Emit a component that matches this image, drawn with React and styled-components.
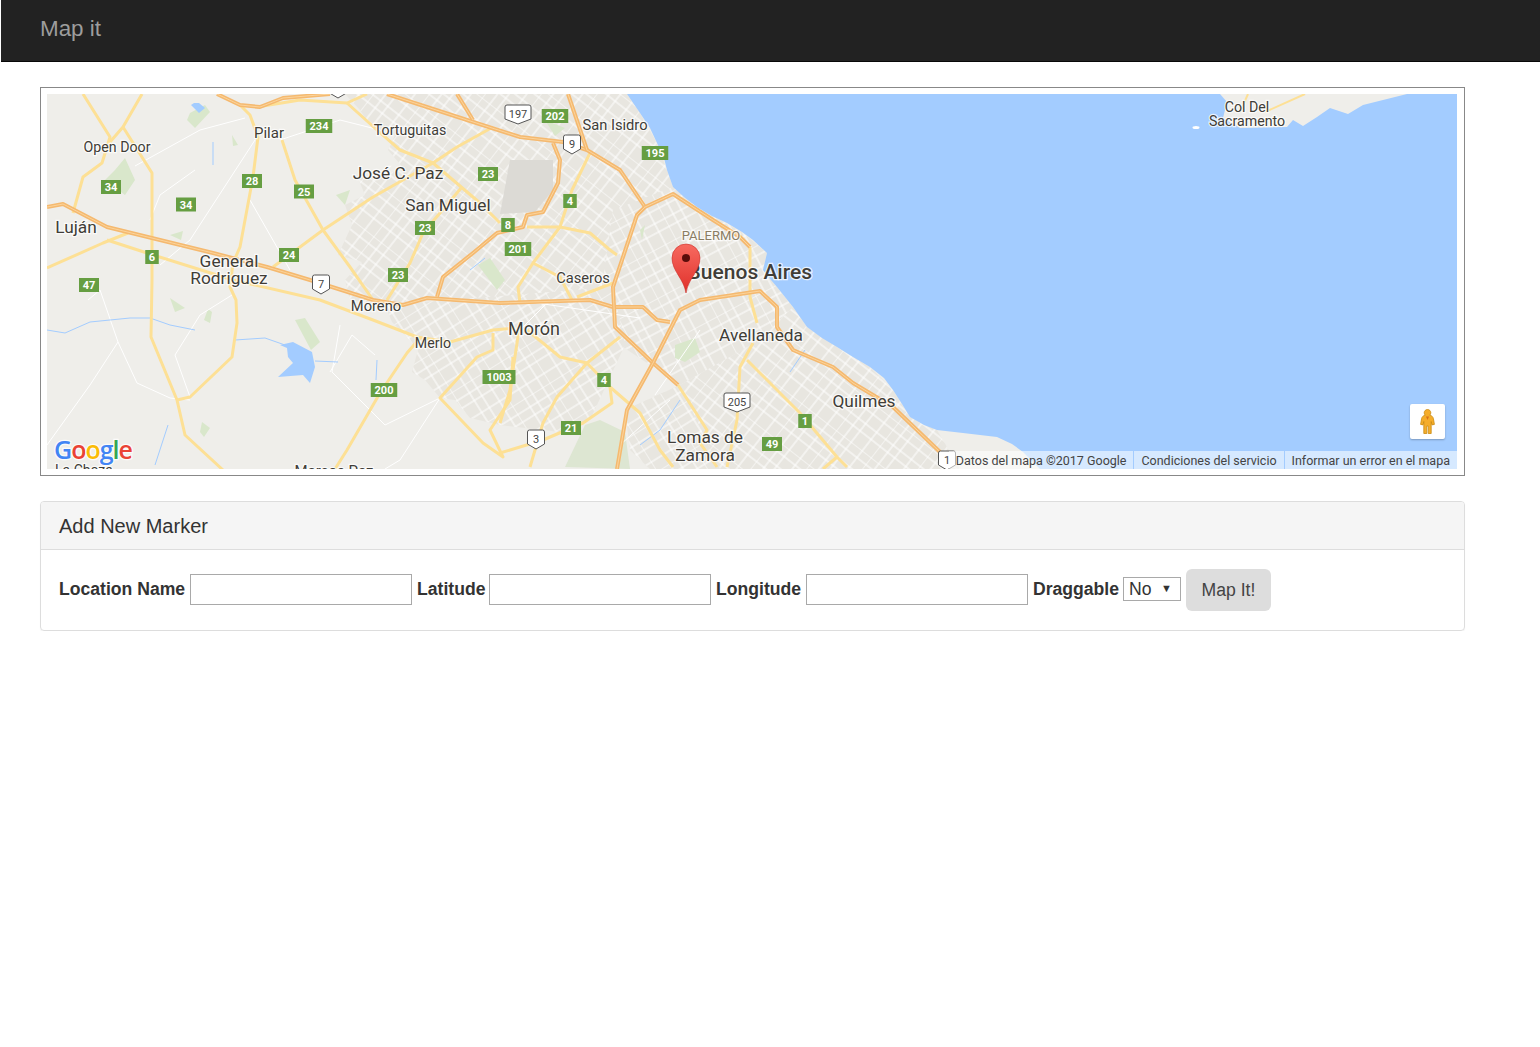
import React from 'react';
import styled, { createGlobalStyle } from 'styled-components';

const GlobalStyle = createGlobalStyle`
  html, body {
    margin: 0;
    background: #fff;
    font-family: "Liberation Sans", Arial, sans-serif;
    color: #333;
  }
`;

const Navbar = styled.nav`
  height: 61px;
  margin-left: 1px;
  padding-left: 39px;
  display: flex;
  align-items: center;
  background: #222;
  border-bottom: 1px solid #080808;
`;

const Brand = styled.a`
  color: #9d9d9d;
  font-size: 22.4px;
  position: relative;
  top: -2px;
`;

const Page = styled.main`
  width: 1425px;
  margin-left: 40px;
  padding-top: 25px;
`;

const MapFrame = styled.div`
  box-sizing: border-box;
  height: 389px;
  padding: 6px 7px 6px 6px;
  border: 1px solid #888;
`;

const MapCanvas = styled.div`
  position: relative;
  height: 375px;
  overflow: hidden;
`;

const MapSvg = styled.svg`
  display: block;
  width: 1410px;
  height: 375px;
`;

const Label = styled.text`
  font-family: Roboto, sans-serif;
  font-size: ${(p) => p.$size || 14}px;
  font-weight: ${(p) => p.$weight || 400};
  fill: ${(p) => p.$color || '#403d37'};
  stroke: rgba(255, 255, 255, 0.75);
  stroke-width: 2.5px;
  paint-order: stroke;
  text-anchor: ${(p) => p.$anchor || 'middle'};
`;

const ShieldText = styled.text`
  font-family: Roboto, sans-serif;
  font-size: 11px;
  font-weight: ${(p) => (p.$white ? 400 : 700)};
  fill: ${(p) => (p.$white ? '#444' : '#fff')};
  text-anchor: middle;
`;

const LogoText = styled.text`
  font-family: "Open Sans", sans-serif;
  font-size: 25px;
  font-weight: 600;
  letter-spacing: -1px;
  stroke: rgba(255, 255, 255, 0.8);
  stroke-width: 2.5px;
  paint-order: stroke;
`;

const Attribution = styled.div`
  position: absolute;
  right: 0;
  bottom: 0;
  height: 18px;
  display: flex;
  gap: 1px;
  font-family: Roboto, sans-serif;
  font-size: 12.5px;
  line-height: 19px;
  color: #444;
`;

const AttributionItem = styled.span`
  padding: 0 7px;
  background: rgba(255, 255, 255, 0.56);
  white-space: nowrap;
`;

const Pegman = styled.div`
  position: absolute;
  right: 12px;
  bottom: 30px;
  width: 35px;
  height: 35px;
  display: flex;
  align-items: center;
  justify-content: center;
  background: #fff;
  border-radius: 2px;
  box-shadow: 0 1px 2px rgba(0, 0, 0, 0.25);
`;

const Panel = styled.section`
  margin-top: 25px;
  border: 1px solid #ddd;
  border-radius: 4px;
  box-shadow: 0 1px 1px rgba(0, 0, 0, 0.05);
`;

const PanelHeading = styled.h3`
  box-sizing: border-box;
  height: 48px;
  margin: 0;
  padding: 1px 0 0 18px;
  display: flex;
  align-items: center;
  font-size: 20px;
  font-weight: 400;
  color: #333;
  background: #f5f5f5;
  border-bottom: 1px solid #ddd;
  border-radius: 3px 3px 0 0;
`;

const MarkerForm = styled.form`
  box-sizing: border-box;
  height: 80px;
  padding: 0 0 2px 18px;
  display: flex;
  align-items: center;
  gap: 5px;
`;

const FieldLabel = styled.label`
  width: ${(p) => p.$width}px;
  font-size: 17.6px;
  font-weight: 700;
  color: #333;
  white-space: nowrap;
`;

const TextInput = styled.input`
  box-sizing: border-box;
  width: 222px;
  height: 31px;
  padding: 1px 2px;
  border: 1px solid #a9a9a9;
  background: #fff;
`;

const SelectBox = styled.div`
  position: relative;
  width: 58px;
  height: 24px;

  &::after {
    content: '▼';
    position: absolute;
    right: 9px;
    top: 5px;
    font-size: 11px;
    line-height: 13px;
    color: #333;
    pointer-events: none;
  }
`;

const Select = styled.select`
  appearance: none;
  box-sizing: border-box;
  width: 100%;
  height: 100%;
  padding: 0 0 0 5px;
  border: 1px solid #a9a9a9;
  border-radius: 0;
  background: #fff;
  font-family: inherit;
  font-size: 17.6px;
  color: #333;
`;

const MapButton = styled.button`
  width: 85px;
  height: 42px;
  margin-bottom: -2px;
  padding: 0;
  border: none;
  border-radius: 6px;
  background: #ddd;
  font-family: inherit;
  font-size: 17.6px;
  color: #444;
`;

const WATER = '#a3ccff';
const LAND = '#efeeea';
const URBAN = '#e8e6e0';

const coast = '627,94 640,113 650,128 657,143 664,158 667,170 673,187 684,197 697,207 712,216 727,223 742,232 753,240 767,253 763,270 771,280 777,287 793,307 807,327 822,338 837,347 853,357 870,367 884,378 893,390 902,404 910,417 924,425 937,430 963,433 997,437 1012,444 1023,452 1040,469';
const farShore = '1407,94 1383,100 1363,105 1348,114 1330,108 1317,117 1303,126 1293,120 1287,127 1240,128 1223,118 1227,102 1220,94';

const urbanAreas = [
  { id: 'north', pattern: 'gridA', points: '345,94 627,94 640,113 657,143 667,170 673,187 645,207 613,287 520,303 430,298 385,305 350,300 345,280 362,262 338,255 352,225 345,205 365,195 358,178 405,170 388,150 395,135 372,128 360,110' },
  { id: 'centre', pattern: 'gridB', points: '613,210 673,187 697,207 742,232 767,253 763,270 777,287 793,307 760,340 680,385 620,345 600,300' },
  { id: 'west', pattern: 'gridC', points: '385,305 613,287 625,345 590,420 560,432 500,425 470,418 455,400 440,398 425,380 412,372 418,350 405,335 392,322' },
  { id: 'south', pattern: 'gridA', points: '680,385 760,340 793,307 807,327 837,347 870,367 893,390 910,417 937,430 960,469 720,469 640,445 625,410' },
  { id: 'southwest', pattern: 'gridC', points: '625,410 680,385 720,469 650,469 630,450' },
];

const yellowRoads = [
  '83,94 110,137 102,163 83,177 73,213',
  '142,94 123,127 110,142',
  '123,127 152,173 152,280 151,337 177,400 185,435 223,470',
  '47,268 103,243 128,233',
  '107,240 147,253 233,280 320,300 373,320 417,337 450,342 493,330 515,328',
  '258,137 253,177 240,247 233,263 230,287 236,300 237,323 232,357 190,397 177,400',
  '282,140 295,180 323,230 350,267 373,300',
  '273,267 323,230 373,197 433,163 457,147 493,127',
  '347,103 377,130 400,150 433,163 480,203 500,223',
  '462,187 423,233 410,263 387,300',
  '257,107 300,100 347,103 367,94',
  '335,469 347,450 380,393 407,353 420,338',
  '493,333 493,350 477,357 440,398 483,443 503,457 490,430 510,400 513,357',
  '590,153 572,190 560,227 533,263 518,287 520,303',
  '527,227 560,227 590,233 610,250 617,255',
  '533,263 560,277 572,300',
  '577,297 613,283',
  '520,323 510,390 500,423',
  '527,330 560,357 587,363 610,387 612,403 583,423 543,440 500,453',
  '620,337 587,363 557,397 543,423 530,467',
  '678,385 707,430 700,443 717,467',
  '610,387 640,413 660,450 673,467',
  '750,247 750,297 757,323',
  '753,343 740,367 737,420 727,467',
  '747,360 800,413 837,457 847,467',
  '837,457 823,469',
  '258,137 250,115 240,105',
];

const orangeRoads = [
  '47,207 63,204 107,227 213,253 267,267 310,280 373,300 403,305 427,298 500,303 590,300 613,307 643,307 657,320 670,322',
  '217,94 240,105 260,107 283,98 330,94',
  '387,94 467,120 520,137 563,142 587,150 620,170 645,207',
  '457,94 473,120',
  '568,94 587,150',
  '645,207 673,194 713,220 740,237 750,247',
  '645,207 637,215 613,287 615,327 653,363 678,385',
  '617,469 627,410 653,363 680,310 700,300 760,291 777,307 777,327 793,350 833,367 853,383 893,407 940,452',
  '437,297 443,277 473,253 497,233 523,227 527,215 543,212 558,183 560,160 553,143',
];

const minorRoads = [
  '135,166 200,130 245,118',
  '160,265 190,240 255,140',
  '250,200 290,270',
  '47,445 90,385 118,342 100,290 88,300',
  '118,342 137,383 170,398 190,400',
  '190,397 175,355 200,315 232,295',
  '340,325 332,372 385,425',
  '385,425 440,398',
  '330,372 352,335 375,355',
  '440,398 400,460 385,469',
  '195,170 160,195 150,220',
  '280,140 340,120 380,130',
  '670,400 620,445',
  '700,330 655,395',
  '530,302 640,318',
  '515,335 545,305',
];

const greenPatches = [
  '190,113 205,105 210,112 195,128 187,120',
  '115,170 125,158 135,180 125,195 105,180',
  '170,235 183,231 181,240',
  '232,135 238,145 233,146',
  '478,265 490,258 505,280 497,290',
  '208,309 212,312 210,323 204,320',
  '202,422 210,428 204,437 200,432',
  '295,320 305,318 320,342 311,350',
  '675,345 695,338 700,352 685,362 675,358',
  '545,120 565,128 555,136',
  '336,195 350,190 345,205',
  '170,298 185,308 175,312',
  '640,230 645,225 642,240',
];

const waterLines = [
  '47,330 65,333 90,322 130,318 150,318 170,325 195,330',
  '235,340 265,338 285,345',
  '315,361 338,362',
  '377,360 376,380',
  '168,425 155,465',
  '680,400 660,430 640,445',
  '805,350 790,372',
  '470,270 485,258',
  '213,142 213,165',
];

const lake = '280,345 293,342 312,352 315,367 310,383 303,375 278,377 293,363 288,357 287,348';
const smallPond = '191,105 199,113 205,108 199,103 194,103';
const airfield = '510,160 553,160 553,190 535,212 500,214';
const reserve = '565,467 585,425 600,420 625,432 630,469';

const greenShields = [
  ['234', 319, 126], ['34', 111, 187], ['34', 186, 204.5], ['28', 252, 181],
  ['25', 304, 191.5], ['23', 488, 174], ['23', 425, 228], ['23', 398, 275],
  ['24', 289, 255], ['6', 152, 257], ['47', 89, 285], ['8', 508, 225],
  ['4', 570, 201], ['202', 555, 116], ['195', 655, 153], ['201', 518, 249],
  ['1003', 499, 377], ['200', 384, 390], ['4', 604, 380], ['21', 571, 428],
  ['1', 805, 421], ['49', 772, 444],
];

const whiteShields = [
  ['197', 518, 114], ['9', 572, 144], ['7', 321, 284], ['205', 737, 402],
  ['3', 536, 439], ['1', 947, 460], ['', 338, 88],
];

const labels = [
  ['Open Door', 117, 152, 14.2], ['Pilar', 269, 138, 15], ['Tortuguitas', 410, 135, 14.2],
  ['José C. Paz', 398, 179, 17.3], ['San Miguel', 448, 211, 17.3], ['Luján', 76, 233, 17.3],
  ['General', 229, 267, 17.3], ['Rodriguez', 229, 284, 17.3], ['Moreno', 376, 311, 14.7],
  ['Merlo', 433, 348, 14.2], ['Morón', 534, 335, 18], ['Caseros', 583, 283, 14.7],
  ['San Isidro', 615, 130, 14.7], ['Avellaneda', 761, 341, 17.3], ['Quilmes', 864, 407, 17.3],
  ['Lomas de', 705, 443, 17.3], ['Zamora', 705, 461, 17.3], ['Col Del', 1247, 112, 14.2],
  ['Sacramento', 1247, 126, 14.2], ['La Choza', 84, 475, 14], ['Marcos Paz', 334, 476, 15],
];

// uneven street spacing, so the city does not read as a perfect lattice
const gridLines = 'M0 0H44M0 9H44M0 21H44M0 30H44M0 0V44M10 0V44M19 0V44M33 0V44';

const Grid = ({ id, angle }) => (
  <pattern id={id} width="44" height="44" patternUnits="userSpaceOnUse" patternTransform={`rotate(${angle})`}>
    <path d={gridLines} stroke="#fff" strokeWidth="1" fill="none" />
  </pattern>
);

const GreenShield = ({ text, x, y }) => {
  const w = text.length * 6.5 + 7;
  return (
    <g>
      <rect x={x - w / 2} y={y - 7} width={w} height={14} fill="#669e42" />
      <ShieldText x={x} y={y + 4}>{text}</ShieldText>
    </g>
  );
};

const WhiteShield = ({ text, x, y }) => {
  const w = text.length > 2 ? 26 : 17;
  const l = x - w / 2;
  const r = x + w / 2;
  return (
    <g>
      <path
        d={`M${l + 2} ${y - 9}H${r - 2}Q${r} ${y - 9} ${r} ${y - 7}V${y + 5}L${x} ${y + 10}L${l} ${y + 5}V${y - 7}Q${l} ${y - 9} ${l + 2} ${y - 9}Z`}
        fill="#fff"
        stroke="#555"
        strokeWidth="1"
      />
      <ShieldText $white x={x} y={y + 4}>{text}</ShieldText>
    </g>
  );
};

const MapDrawing = () => (
  <MapSvg viewBox="47 94 1410 375">
    <defs>
      <Grid id="gridA" angle={38} />
      <Grid id="gridB" angle={-28} />
      <Grid id="gridC" angle={58} />
      <linearGradient id="pinFill" x1="0" y1="0" x2="0" y2="1">
        <stop offset="0" stopColor="#f76a60" />
        <stop offset="1" stopColor="#e0302a" />
      </linearGradient>
    </defs>
    <rect x="47" y="94" width="1410" height="375" fill={LAND} />
    {urbanAreas.map((a) => (
      <g key={a.id}>
        <polygon points={a.points} fill={URBAN} />
        <polygon points={a.points} fill={`url(#${a.pattern})`} />
      </g>
    ))}
    <polygon points={airfield} fill="#dcdad5" />
    <polygon points={reserve} fill="#dde6d2" />
    {greenPatches.map((p) => (
      <polygon key={p} points={p} fill="#d9e7cb" />
    ))}
    {minorRoads.map((r) => (
      <polyline key={r} points={r} fill="none" stroke="#fff" strokeWidth="1" />
    ))}
    {waterLines.map((r) => (
      <polyline key={r} points={r} fill="none" stroke={WATER} strokeWidth="1" />
    ))}
    <polygon points={lake} fill={WATER} />
    <polygon points={smallPond} fill={WATER} />
    {yellowRoads.map((r) => (
      <polyline key={r} points={r} fill="none" stroke="#fde095" strokeWidth="3" strokeLinejoin="round" />
    ))}
    {orangeRoads.map((r) => (
      <g key={r}>
        <polyline points={r} fill="none" stroke="#f5b96f" strokeWidth="4" strokeLinejoin="round" />
        <polyline points={r} fill="none" stroke="#fbd49c" strokeWidth="1" strokeLinejoin="round" />
      </g>
    ))}
    <polygon points={`${coast} 1457,469 1457,94 ${farShore}`} fill={WATER} />
    <polyline points="1248,94 1240,112" fill="none" stroke="#fde095" strokeWidth="2" />
    <polyline points="1265,112 1305,94" fill="none" stroke="#fde095" strokeWidth="2" />
    <ellipse cx="1196" cy="127.5" rx="3.5" ry="1.5" fill="#fff" />
    {greenShields.map(([t, x, y]) => (
      <GreenShield key={`${t}-${x}`} text={t} x={x} y={y} />
    ))}
    {whiteShields.map(([t, x, y]) => (
      <WhiteShield key={`${t}-${x}`} text={t} x={x} y={y} />
    ))}
    {labels.map(([t, x, y, s]) => (
      <Label key={t} x={x} y={y} $size={s}>{t}</Label>
    ))}
    <Label x={711} y={240} $size={13} $color="#8a7d63">PALERMO</Label>
    <Label x={812} y={279} $size={21} $weight={500} $anchor="end">Buenos Aires</Label>
    <path
      d="M686 293C684 279 672 271 672 258A14 14 0 0 1 700 258C700 271 688 279 686 293Z"
      fill="url(#pinFill)"
      stroke="#c9302a"
      strokeWidth="0.6"
    />
    <circle cx="686" cy="258" r="4" fill="#5a0d0a" />
    <LogoText x={54} y={459}>
      <tspan fill="#4285f4">G</tspan>
      <tspan fill="#ea4335">o</tspan>
      <tspan fill="#fbbc05">o</tspan>
      <tspan fill="#4285f4">g</tspan>
      <tspan fill="#34a853">l</tspan>
      <tspan fill="#ea4335">e</tspan>
    </LogoText>
  </MapSvg>
);

const App = () => (
  <>
    <GlobalStyle />
    <Navbar>
      <Brand>Map it</Brand>
    </Navbar>
    <Page>
      <MapFrame>
        <MapCanvas>
          <MapDrawing />
          <Pegman>
            <svg width="15" height="25" viewBox="0 0 15 25">
              <path
                d="M7.5 0.5C9.4 0.5 10.8 2 10.8 3.8C10.8 4.8 10.4 5.6 9.8 6.2C11.8 6.6 13 7.8 13.4 9.6L14.4 15.4L12 15.9L11.2 12.5V24.5H8.2V17H6.8V24.5H3.8V12.5L3 15.9L0.6 15.4L1.6 9.6C2 7.8 3.2 6.6 5.2 6.2C4.6 5.6 4.2 4.8 4.2 3.8C4.2 2 5.6 0.5 7.5 0.5Z"
                fill="#f5ad2b"
                stroke="#c98a12"
                strokeWidth="0.8"
              />
              <path d="M6 7.5L7.5 11L9 7.5Z" fill="#d9731a" />
            </svg>
          </Pegman>
          <Attribution>
            <AttributionItem>Datos del mapa ©2017 Google</AttributionItem>
            <AttributionItem>Condiciones del servicio</AttributionItem>
            <AttributionItem>Informar un error en el mapa</AttributionItem>
          </Attribution>
        </MapCanvas>
      </MapFrame>
      <Panel>
        <PanelHeading>Add New Marker</PanelHeading>
        <MarkerForm onSubmit={(e) => e.preventDefault()}>
          <FieldLabel $width={126}>Location Name</FieldLabel>
          <TextInput type="text" />
          <FieldLabel $width={67}>Latitude</FieldLabel>
          <TextInput type="text" />
          <FieldLabel $width={85}>Longitude</FieldLabel>
          <TextInput type="text" />
          <FieldLabel $width={85}>Draggable</FieldLabel>
          <SelectBox>
            <Select defaultValue="No">
              <option>No</option>
              <option>Yes</option>
            </Select>
          </SelectBox>
          <MapButton type="submit">Map It!</MapButton>
        </MarkerForm>
      </Panel>
    </Page>
  </>
);

export default App;
